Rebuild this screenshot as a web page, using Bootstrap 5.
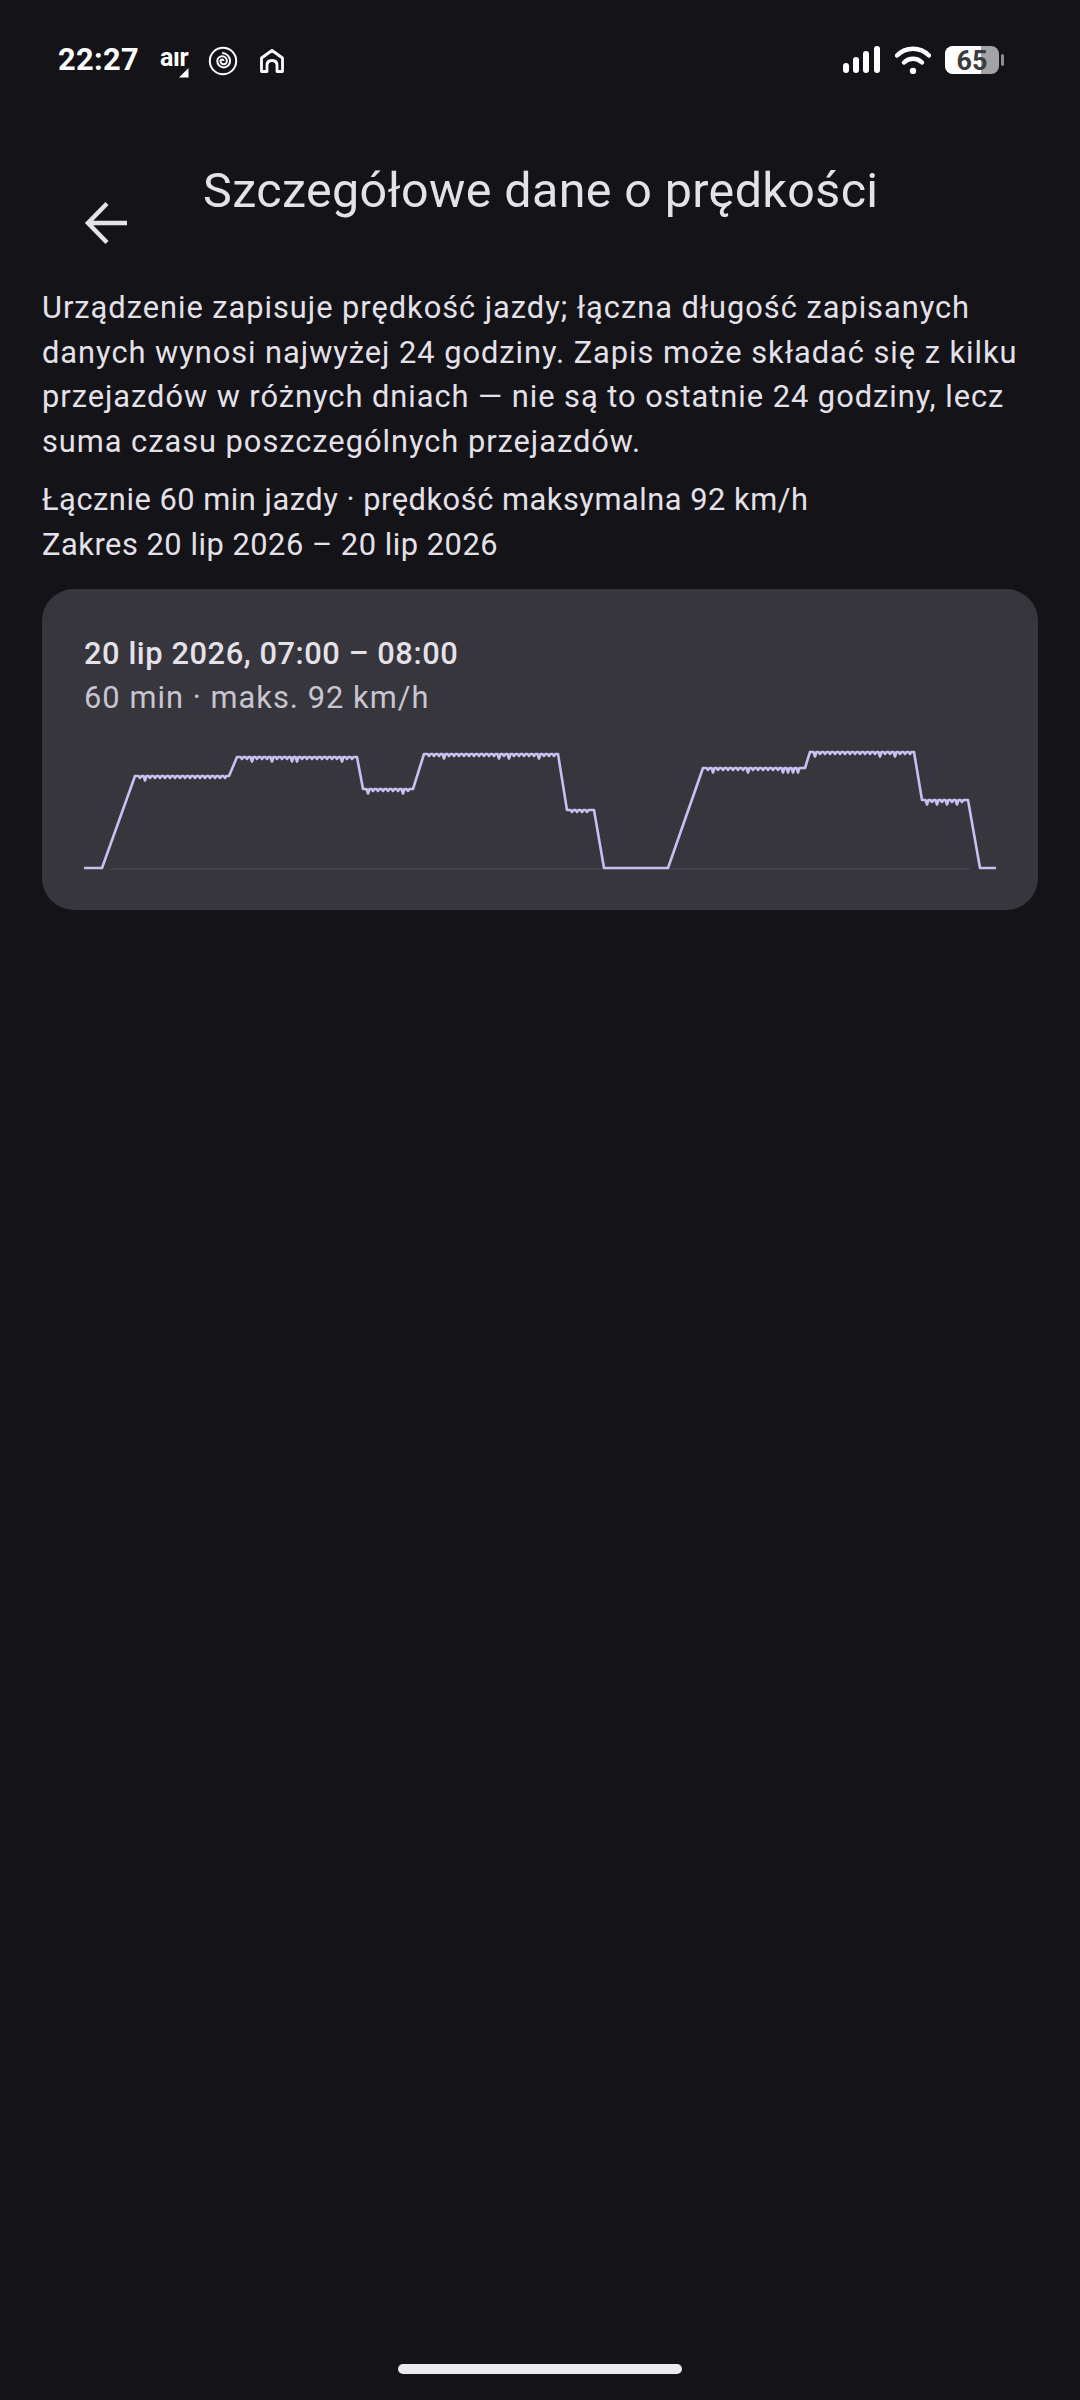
<!DOCTYPE html>
<html lang="pl">

<head>
    <meta charset="UTF-8" />
    <meta name="viewport" content="width=device-width, initial-scale=1.0" />
    <title>Szczegółowe dane o prędkości</title>
    <link href="https://cdn.jsdelivr.net/npm/bootstrap@5.3.3/dist/css/bootstrap.min.css" rel="stylesheet" />
    <style>
        body {
            background: #131318;
            color: #e5e1e9;
            font-family: Roboto, "Liberation Sans", sans-serif;
        }

        .ekran {
            height: 2400px;
        }

        .pasek-stanu {
            height: 120px;
            padding: 0 75px 0 58px;
            color: #fff;
        }

        .godzina {
            font-size: 30.8px;
            font-weight: 700;
            letter-spacing: 0.3px;
            width: 102px;
        }

        .logo-air {
            font-size: 25px;
            font-weight: 700;
            width: 48px;
            line-height: 1;
            letter-spacing: -0.3px;
            margin-bottom: 6px;
            position: relative;
        }

        .logo-air svg {
            position: absolute;
            left: 19px;
            top: 23px;
        }

        .ikona-spirala {
            margin-right: 22px;
            margin-top: 2px;
        }

        .ikona-dom {
            margin-top: 1px;
        }

        .ikona-stan {
            margin-left: 14px;
        }

        .naglowek {
            height: 126px;
            padding-left: 84px;
        }

        .naglowek svg {
            margin-top: 81px;
        }

        .tytul {
            font-size: 48.4px;
            font-weight: 400;
            line-height: 66px;
            letter-spacing: 0.4px;
            margin: 38px 0 0 75px;
        }

        .opis {
            padding: 40px 42px 0;
            font-size: 30.8px;
            line-height: 44.7px;
            letter-spacing: 0.53px;
        }

        .opis p {
            margin: 0 0 13px;
            letter-spacing: 0.97px;
        }

        .wykres-karta {
            margin: 22px 42px 0;
            height: 321px;
            background: #37363d;
            border-radius: 32px;
            padding: 43px 42px 0;
        }

        .wykres-tytul {
            font-size: 30.8px;
            font-weight: 500;
            line-height: 44px;
            letter-spacing: 0.58px;
        }

        .wykres-podtytul {
            font-size: 30.8px;
            line-height: 44px;
            letter-spacing: 1.04px;
            color: #c9c5d0;
        }

        .wykres {
            display: block;
            margin-top: 25px;
        }

        .kreska-dolna {
            width: 284px;
            height: 10px;
            background: #ebebed;
            border-radius: 5px;
            margin-top: auto;
            margin-bottom: 26px;
        }
    </style>
</head>

<body>
    <div class="ekran d-flex flex-column">
        <!-- pasek stanu -->
        <div class="pasek-stanu d-flex align-items-center">
            <span class="godzina">22:27</span>
            <span class="logo-air">aır
                <svg width="10" height="10" viewBox="0 0 10 10"><path d="M9.500 0v9.500H0z" fill="#fff" /></svg>
            </span>
            <svg class="ikona-spirala" width="30" height="30" viewBox="0 0 30 30" fill="none" stroke="#fff" stroke-width="2">
                <circle cx="15" cy="15" r="13.200" />
                <path d="M15.500 15a1.500 1.500 0 0 0-3 0a3.200 3.200 0 0 0 6.400 0a4.800 4.800 0 0 0-9.600 0a6.400 6.400 0 0 0 12.800 0a8 8 0 0 0-8-8" />
            </svg>
            <svg class="ikona-dom" width="24" height="24" viewBox="0 0 24 24" fill="none" stroke="#fff" stroke-width="2.800" stroke-linejoin="round">
                <path d="M1.500 22.500V9L12 1.500 22.500 9v13.500h-5.500v-6q0-5-5-5t-5 5v6z" />
            </svg>
            <div class="ms-auto d-flex align-items-center">
                <svg width="38" height="28" viewBox="0 0 38 28" fill="#fff">
                    <rect x="0" y="17" width="6" height="10" rx="3" />
                    <rect x="10" y="11" width="6" height="16" rx="3" />
                    <rect x="20" y="5" width="6" height="22" rx="3" />
                    <rect x="31" y="0" width="6" height="27" rx="3" />
                </svg>
                <svg class="ikona-stan" width="36" height="28" viewBox="0 0 36 28" fill="none" stroke="#fff" stroke-width="4.500" stroke-linecap="round">
                    <path d="M2 9.500c9-9 23-9 32 0" />
                    <path d="M9 16.500c5-5 13-5 18 0" />
                    <circle cx="18" cy="25" r="3.200" fill="#fff" stroke="none" />
                </svg>
                <svg class="ikona-stan" width="60" height="30" viewBox="0 0 60 30">
                    <rect x="0" y="1" width="54" height="28" rx="8" fill="#a3a2a5" />
                    <path d="M8 1h28v28H8a8 8 0 0 1-8-8V9a8 8 0 0 1 8-8z" fill="#fff" />
                    <rect x="56" y="9" width="3" height="12" rx="1.500" fill="#8c8b8e" />
                    <text x="27" y="24.500" text-anchor="middle" font-family="Roboto" font-size="27" font-weight="700" fill="#3c3c40">65</text>
                </svg>
            </div>
        </div>

        <!-- naglowek -->
        <div class="naglowek d-flex align-items-start">
            <svg width="44" height="44" viewBox="0 0 44 44" fill="none" stroke="#e5e1e9" stroke-width="4.500">
                <path d="M43 22H4M23 2.500 4 22l19 19.500" />
            </svg>
            <h1 class="tytul">Szczegółowe dane o prędkości</h1>
        </div>

        <div class="opis">
            <p>Urządzenie zapisuje prędkość jazdy; łączna długość zapisanych danych wynosi najwyżej 24 godziny. Zapis może składać się z kilku przejazdów w różnych dniach — nie są to ostatnie 24 godziny, lecz suma czasu poszczególnych przejazdów.</p>
            <div>Łącznie 60 min jazdy · prędkość maksymalna 92 km/h</div>
            <div>Zakres 20 lip 2026 – 20 lip 2026</div>
        </div>

        <div class="wykres-karta">
            <div class="wykres-tytul">20 lip 2026, 07:00 – 08:00</div>
            <div class="wykres-podtytul">60 min · maks. 92 km/h</div>
            <svg class="wykres" id="wykres" width="912" height="130" viewBox="84 745 912 130" fill="none">
                <path d="M110 869H970" stroke="#45444a" stroke-width="1.500" />
                <path id="linia" stroke="#c8c0f0" stroke-width="2.600" stroke-linejoin="round" />
            </svg>
        </div>

        <div class="kreska-dolna align-self-center"></div>
    </div>

    <script>
        // punkty przebiegu predkosci, plaskie odcinki dostaja drobne zabki
        const punkty = [
            [84, 868], [102, 868], [135, 776], [229, 776], [237, 757], [357, 757], [363, 789], [413, 789],
            [424, 754], [558, 754], [567, 810], [594, 810], [604, 868], [668, 868], [703, 768], [805, 768],
            [810, 752], [914, 752], [922, 800], [968, 800], [980, 868], [996, 868]
        ];
        let ziarno = 7;
        function los() {
            ziarno = (ziarno * 16807) % 2147483647;
            return ziarno / 2147483647;
        }
        let d = `M${punkty[0][0]} ${punkty[0][1]}`;
        for (let i = 1; i < punkty.length; i++) {
            const [x0, y0] = punkty[i - 1];
            const [x1, y1] = punkty[i];
            if (y0 === y1 && y0 !== 868) {
                for (let x = x0 + 5; x < x1 - 3; x += 5) {
                    const r = los();
                    const dy = r > 0.85 ? 4.5 : 2;
                    d += `L${x - 1.5} ${y0}L${x} ${y0 + dy}L${x + 1.5} ${y0}`;
                }
            }
            d += `L${x1} ${y1}`;
        }
        document.getElementById("linia").setAttribute("d", d);
    </script>
    <script src="https://cdn.jsdelivr.net/npm/bootstrap@5.3.3/dist/js/bootstrap.bundle.min.js"></script>
</body>

</html>
